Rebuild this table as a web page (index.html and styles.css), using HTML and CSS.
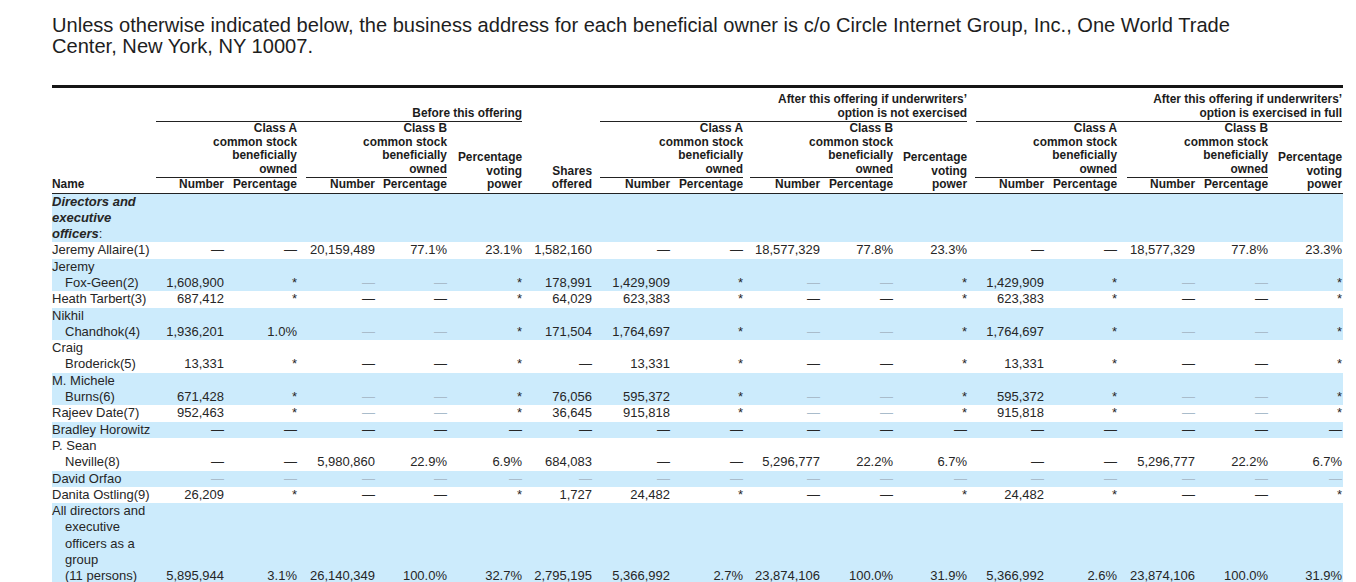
FILE: index.html
```html
<!DOCTYPE html>
<html lang="en">
<head>
<meta charset="utf-8">
<title>Beneficial ownership</title>
<link rel="stylesheet" href="styles.css">
</head>
<body>
<div class="page">
  <p class="intro">Unless otherwise indicated below, the business address for each beneficial owner is c/o Circle Internet Group, Inc., One World Trade Center, New York, NY 10007.</p>
  <div class="rule"></div>
  <table class="own">
    <colgroup>
      <col class="w103"><col class="w70"><col class="w73"><col class="w78"><col class="w72"><col class="w75"><col class="w70">
      <col class="w78"><col class="w73"><col class="w77"><col class="w73"><col class="w74">
      <col class="w77"><col class="w73"><col class="w78"><col class="w73"><col class="w74">
    </colgroup>
    <thead>
      <tr class="h1">
        <th rowspan="3" class="nmh bot">Name</th>
        <th colspan="5"><div class="ul m1">Before this offering</div></th>
        <th rowspan="3" class="bot">Shares<br>offered</th>
        <th colspan="5"><div class="ul m7">After this offering if underwriters’<br>option is not exercised</div></th>
        <th colspan="5"><div class="ul m8">After this offering if underwriters’<br>option is exercised in full</div></th>
      </tr>
      <tr class="h2">
        <th colspan="2"><div class="ul m1">Class A<br>common stock<br>beneficially<br>owned</div></th>
        <th colspan="2"><div class="ul m8">Class B<br>common stock<br>beneficially<br>owned</div></th>
        <th rowspan="2" class="bot">Percentage<br>voting<br>power</th>
        <th colspan="2"><div class="ul m7">Class A<br>common stock<br>beneficially<br>owned</div></th>
        <th colspan="2"><div class="ul m6">Class B<br>common stock<br>beneficially<br>owned</div></th>
        <th rowspan="2" class="bot">Percentage<br>voting<br>power</th>
        <th colspan="2"><div class="ul m7">Class A<br>common stock<br>beneficially<br>owned</div></th>
        <th colspan="2"><div class="ul m9">Class B<br>common stock<br>beneficially<br>owned</div></th>
        <th rowspan="2" class="bot">Percentage<br>voting<br>power</th>
      </tr>
      <tr class="h3">
        <th class="bot">Number</th><th class="bot">Percentage</th>
        <th class="bot">Number</th><th class="bot">Percentage</th>
        <th class="bot">Number</th><th class="bot">Percentage</th>
        <th class="bot">Number</th><th class="bot">Percentage</th>
        <th class="bot">Number</th><th class="bot">Percentage</th>
        <th class="bot">Number</th><th class="bot">Percentage</th>
      </tr>
    </thead>
    <tbody>
      <tr class="blue">
        <td colspan="17" class="sect"><em>Directors and<br>executive<br>officers</em>:</td>
      </tr>
      <tr>
        <td class="nm">Jeremy Allaire(1)</td>
        <td>—</td><td>—</td><td>20,159,489</td><td>77.1%</td><td>23.1%</td><td>1,582,160</td>
        <td>—</td><td>—</td><td>18,577,329</td><td>77.8%</td><td>23.3%</td>
        <td>—</td><td>—</td><td>18,577,329</td><td>77.8%</td><td>23.3%</td>
      </tr>
      <tr class="blue">
        <td class="nm">Jeremy<br>Fox-Geen(2)</td>
        <td>1,608,900</td><td>*</td><td class="lt">—</td><td class="lt">—</td><td>*</td><td>178,991</td>
        <td>1,429,909</td><td>*</td><td class="lt">—</td><td class="lt">—</td><td>*</td>
        <td>1,429,909</td><td>*</td><td class="lt">—</td><td class="lt">—</td><td>*</td>
      </tr>
      <tr>
        <td class="nm">Heath Tarbert(3)</td>
        <td>687,412</td><td>*</td><td>—</td><td>—</td><td>*</td><td>64,029</td>
        <td>623,383</td><td>*</td><td>—</td><td>—</td><td>*</td>
        <td>623,383</td><td>*</td><td>—</td><td>—</td><td>*</td>
      </tr>
      <tr class="blue">
        <td class="nm">Nikhil<br>Chandhok(4)</td>
        <td>1,936,201</td><td>1.0%</td><td class="lt">—</td><td class="lt">—</td><td>*</td><td>171,504</td>
        <td>1,764,697</td><td>*</td><td class="lt">—</td><td class="lt">—</td><td>*</td>
        <td>1,764,697</td><td>*</td><td class="lt">—</td><td class="lt">—</td><td>*</td>
      </tr>
      <tr>
        <td class="nm">Craig<br>Broderick(5)</td>
        <td>13,331</td><td>*</td><td>—</td><td>—</td><td>*</td><td>—</td>
        <td>13,331</td><td>*</td><td>—</td><td>—</td><td>*</td>
        <td>13,331</td><td>*</td><td>—</td><td>—</td><td>*</td>
      </tr>
      <tr class="blue">
        <td class="nm">M. Michele<br>Burns(6)</td>
        <td>671,428</td><td>*</td><td class="lt">—</td><td class="lt">—</td><td>*</td><td>76,056</td>
        <td>595,372</td><td>*</td><td class="lt">—</td><td class="lt">—</td><td>*</td>
        <td>595,372</td><td>*</td><td class="lt">—</td><td class="lt">—</td><td>*</td>
      </tr>
      <tr>
        <td class="nm">Rajeev Date(7)</td>
        <td>952,463</td><td>*</td><td class="lt">—</td><td class="lt">—</td><td>*</td><td>36,645</td>
        <td>915,818</td><td>*</td><td class="lt">—</td><td class="lt">—</td><td>*</td>
        <td>915,818</td><td>*</td><td class="lt">—</td><td class="lt">—</td><td>*</td>
      </tr>
      <tr class="blue">
        <td class="nm">Bradley Horowitz</td>
        <td>—</td><td>—</td><td>—</td><td>—</td><td>—</td><td>—</td>
        <td>—</td><td>—</td><td>—</td><td>—</td><td>—</td>
        <td>—</td><td>—</td><td>—</td><td>—</td><td>—</td>
      </tr>
      <tr>
        <td class="nm">P. Sean<br>Neville(8)</td>
        <td>—</td><td>—</td><td>5,980,860</td><td>22.9%</td><td>6.9%</td><td>684,083</td>
        <td>—</td><td>—</td><td>5,296,777</td><td>22.2%</td><td>6.7%</td>
        <td>—</td><td>—</td><td>5,296,777</td><td>22.2%</td><td>6.7%</td>
      </tr>
      <tr class="blue">
        <td class="nm">David Orfao</td>
        <td class="lt">—</td><td class="lt">—</td><td class="lt">—</td><td class="lt">—</td><td class="lt">—</td><td class="lt">—</td>
        <td class="lt">—</td><td class="lt">—</td><td class="lt">—</td><td class="lt">—</td><td class="lt">—</td>
        <td class="lt">—</td><td class="lt">—</td><td class="lt">—</td><td class="lt">—</td><td class="lt">—</td>
      </tr>
      <tr>
        <td class="nm">Danita Ostling(9)</td>
        <td>26,209</td><td>*</td><td>—</td><td>—</td><td>*</td><td>1,727</td>
        <td>24,482</td><td>*</td><td>—</td><td>—</td><td>*</td>
        <td>24,482</td><td>*</td><td>—</td><td>—</td><td>*</td>
      </tr>
      <tr class="blue">
        <td class="nm">All directors and<br>executive<br>officers as a<br>group<br>(11 persons)</td>
        <td>5,895,944</td><td>3.1%</td><td>26,140,349</td><td>100.0%</td><td>32.7%</td><td>2,795,195</td>
        <td>5,366,992</td><td>2.7%</td><td>23,874,106</td><td>100.0%</td><td>31.9%</td>
        <td>5,366,992</td><td>2.6%</td><td>23,874,106</td><td>100.0%</td><td>31.9%</td>
      </tr>
    </tbody>
  </table>
</div>
</body>
</html>
```
FILE: styles.css
```css
html, body {
  margin: 0;
  padding: 0;
  background: #ffffff;
}

.page {
  padding: 15px 0 40px 52px;
  color: #222222;
  font-family: "Liberation Sans", Arial, sans-serif;
}

.intro {
  margin: 0;
  width: 1215px;
  font-size: 20.1px;
  line-height: 21px;
  color: #1e1e1e;
}

.rule {
  width: 1291px;
  height: 3px;
  margin-top: 28px;
  background: #151515;
}

.own {
  width: 1291px;
  table-layout: fixed;
  border-collapse: collapse;
  border-spacing: 0;
}

.w103 { width: 103px; }
.w70 { width: 70px; }
.w72 { width: 72px; }
.w73 { width: 73px; }
.w74 { width: 74px; }
.w75 { width: 75px; }
.w77 { width: 77px; }
.w78 { width: 78px; }

.own th {
  padding: 0 1px 0 0;
  font-size: 11.9px;
  line-height: 13.5px;
  font-weight: bold;
  text-align: right;
  vertical-align: bottom;
  white-space: nowrap;
  color: #1c1c1c;
}

.own .h1 th {
  padding-top: 5px;
}

.own th.nmh {
  text-align: left;
}

.own th.bot {
  border-bottom: 1px solid #222222;
  padding-bottom: 1px;
}

.ul {
  border-bottom: 1px solid #222222;
  padding-bottom: 1px;
}

.m1 { margin-left: 1px; }
.m6 { margin-left: 6px; }
.m7 { margin-left: 7px; }
.m8 { margin-left: 8px; }
.m9 { margin-left: 9px; }

.own td {
  padding: 0 1px 0 0;
  font-size: 13px;
  line-height: 16.3px;
  text-align: right;
  vertical-align: bottom;
  white-space: nowrap;
  color: #262626;
}

.own tr.blue td {
  background: #ccebfc;
}

.own td.nm {
  text-align: left;
  padding-left: 13px;
  text-indent: -13px;
}

.own td.sect {
  text-align: left;
}

.own td.sect em {
  font-weight: bold;
  font-style: italic;
}

.own td.lt {
  color: #a9bccb;
}
```
